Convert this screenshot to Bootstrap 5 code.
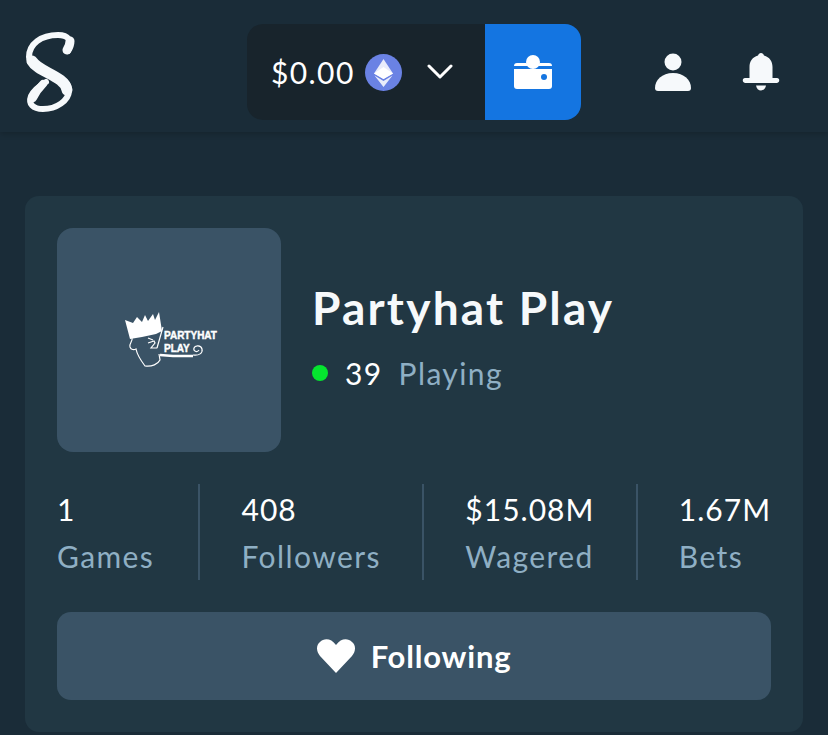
<!DOCTYPE html>
<html lang="en">
<head>
  <title>Partyhat Play</title>
  <meta charset="UTF-8" />
  <meta name="viewport" content="width=device-width, initial-scale=1.0" />
  <link href="https://cdn.jsdelivr.net/npm/bootstrap@5.3.0/dist/css/bootstrap.min.css" rel="stylesheet">
  <style>
    body {
      background-color: #1a2c38;
      font-family: "Lato", "Liberation Sans", sans-serif;
      color: #fff;
      height: 735px;
      overflow: hidden;
      letter-spacing: 1.4px;
    }

    .top-bar {
      height: 132px;
      padding: 12px 48px 0 24px;
      background-color: #1a2c38;
      box-shadow: 0 2px 6px rgba(0, 0, 0, 0.2);
    }

    .logo-mark { width: 52px; height: 82px; }
    .wallet-spot { margin-left: 171px; height: 96px; }

    .wallet-balance {
      width: 238px;
      height: 96px;
      padding-left: 24px;
      background-color: #18242c;
      border-radius: 16px 0 0 16px;
      font-size: 30px;
    }

    .eth-icon { margin-left: 10px; }
    .chevron-icon { margin-left: 25px; }

    .wallet-btn {
      width: 96px;
      height: 96px;
      padding: 0;
      border: 0;
      border-radius: 0 16px 16px 0;
      background-color: #1475e1;
    }

    .top-icons { margin-left: auto; gap: 50px; }

    .studio-box {
      margin: 64px 25px 0;
      padding: 32px;
      background-color: #213743;
      border: 0;
      border-radius: 14px;
      color: #fff;
    }

    .studio-tile {
      width: 224px;
      height: 224px;
      background-color: #3a5366;
      border-radius: 16px;
    }

    .studio-info { margin: 0 0 6px 31px; }

    .studio-name {
      margin: 0 0 18px;
      font-size: 46px;
      font-weight: 700;
      line-height: 54px;
      letter-spacing: 2.2px;
      color: #f6f9fb;
    }

    .online-dot {
      width: 16px;
      height: 16px;
      border-radius: 50%;
      background-color: #05e52f;
    }

    .online-row { font-size: 30px; line-height: 40px; }
    .online-count { margin-left: 17px; }
    .muted-text { color: #8fafc4; }

    .stat-row { height: 96px; margin-top: 32px; }
    .stat-item { padding-top: 2px; font-size: 30px; line-height: 47px; }
    .stat-first { min-width: 100px; }
    .stat-value { letter-spacing: 1px; }
    .stat-line { width: 2px; background-color: #3a5366; }

    .follow-btn {
      height: 88px;
      margin-top: 32px;
      border: 0;
      border-radius: 14px;
      background-color: #3a5366;
      color: #fff;
      font-size: 31px;
      font-weight: 700;
      letter-spacing: 0.8px;
      gap: 16px;
    }

    .party-text {
      font-family: "Liberation Sans", sans-serif;
      font-weight: 700;
      font-size: 10px;
      letter-spacing: 0;
      fill: #fff;
      stroke: #fff;
      stroke-width: 0.4px;
    }
  </style>
</head>
<body>

  <nav class="top-bar d-flex align-items-center">
    <svg class="logo-mark" viewBox="0 0 52 82">
      <g fill="none" stroke="#f6f9fb" stroke-linecap="round">
        <path stroke-width="6" d="M44 20C49 9 44 4 34 4 17 4 5 13 5 26c0 15 40 16 40 33 0 11-13 19-26 19-10 0-15-5-12-13 3-6 8-10 15-14"/>
        <path stroke-width="11" d="M8 30c6 11 33 15 35 29"/>
        <path stroke-width="9" d="M43 19c2-3 3-6 3-9"/>
        <path stroke-width="8" d="M9 67c2-4 6-10 10-14"/>
      </g>
    </svg>

    <div class="wallet-spot d-flex">
      <div class="wallet-balance d-flex align-items-center">
        <span>$0.00</span>
        <svg class="eth-icon" width="37" height="37" viewBox="0 0 37 37">
          <circle cx="18.5" cy="18.5" r="18.5" fill="#6a82e4"/>
          <path fill="#fff" opacity=".85" d="M18.5 5L9 19.500l9.500 5.500 9.500-5.500z"/>
          <path fill="#fff" d="M18.5 13L9 19.500l9.500 5.500 9.500-5.500z"/>
          <path fill="#fff" opacity=".85" d="M9.500 21.500l9 11.500 9-11.500-9 5.500z"/>
        </svg>
        <svg class="chevron-icon" width="26" height="18" viewBox="0 0 26 18">
          <path d="M2 3l11 11L24 3" fill="none" stroke="#fff" stroke-width="3" stroke-linecap="round" stroke-linejoin="round"/>
        </svg>
      </div>
      <button class="wallet-btn btn d-flex align-items-center justify-content-center" type="button" aria-label="Wallet">
        <svg width="38" height="34" viewBox="0 0 38 34">
          <circle cx="19" cy="7" r="7" fill="#fff"/>
          <path fill="#fff" d="M3 8h9.500a7 7 0 0 0 13 0H35a3 3 0 0 1 3 3H0a3 3 0 0 1 3-3z"/>
          <path fill="#fff" d="M0 14h38v17a3 3 0 0 1-3 3H3a3 3 0 0 1-3-3z"/>
          <circle cx="30" cy="22" r="3" fill="#1475e1"/>
        </svg>
      </button>
    </div>

    <div class="top-icons d-flex align-items-center">
      <svg width="38" height="38" viewBox="0 0 38 38">
        <circle cx="19" cy="9" r="8.500" fill="#f6f9fb"/>
        <path fill="#f6f9fb" d="M19 20c11 0 18 7 18 15 0 2-1 3-3 3H4c-2 0-3-1-3-3 0-8 7-15 18-15z"/>
      </svg>
      <svg width="38" height="38" viewBox="0 0 38 38">
        <path fill="#f6f9fb" d="M19 0c1.500 0 2.500 1 3 2.500 5.500 1.500 8.500 6 8.500 11.500v11h4.500c3 0 3 4.500 0 5H3c-3-.5-3-5 0-5h4.500V14c0-5.500 3-10 8.500-11.500C16.500 1 17.500 0 19 0z"/>
        <path fill="#f6f9fb" d="M14 32.500h10c-.5 3-2.500 5-5 5s-4.500-2-5-5z"/>
      </svg>
    </div>
  </nav>

  <div class="studio-box card">
    <div class="d-flex flex-row align-items-center">
      <div class="studio-tile d-flex align-items-center justify-content-center">
        <svg width="110" height="70" viewBox="-5 0 110 70">
          <path fill="#fff" d="M6 15l8 3 4-6 5 5 3-7 3 6 5-7 2 6 4-8 3 19-6 3-14 3-12 2z"/>
          <path fill="none" stroke="#fff" stroke-width="1.200" d="M13 33c1 3-3 5-2 9 1 3 4 3 6 2 1 5 3 9 9 17 7 1 13-2 15-6l-1-6M29 33l5 2M29 38l6-2 1 2-4 5h6M44 22l-6 21"/>
          <text class="party-text" x="45" y="34">PARTYHAT</text>
          <text class="party-text" x="45" y="47">PLAY</text>
          <path fill="none" stroke="#fff" stroke-width="2.500" d="M41 50l13 1h20"/>
          <path fill="none" stroke="#fff" stroke-width="1.200" d="M74 50c6 1 10-2 9-6-1-4-7-4-8-1-1 3 3 5 5 2"/>
        </svg>
      </div>
      <div class="studio-info">
        <h1 class="studio-name">Partyhat Play</h1>
        <div class="online-row d-flex align-items-center">
          <span class="online-dot"></span>
          <span class="online-count">39</span>
          <span class="muted-text ms-3">Playing</span>
        </div>
      </div>
    </div>

    <div class="stat-row d-flex justify-content-between">
      <div class="stat-item stat-first"><div class="stat-value">1</div><div class="muted-text">Games</div></div>
      <div class="stat-line"></div>
      <div class="stat-item"><div class="stat-value">408</div><div class="muted-text">Followers</div></div>
      <div class="stat-line"></div>
      <div class="stat-item"><div class="stat-value">$15.08M</div><div class="muted-text">Wagered</div></div>
      <div class="stat-line"></div>
      <div class="stat-item"><div class="stat-value">1.67M</div><div class="muted-text">Bets</div></div>
    </div>

    <button class="follow-btn btn d-flex align-items-center justify-content-center" type="button">
      <svg width="38" height="34" viewBox="0 0 38 34">
        <path fill="#fff" d="M19 34L3 17C-1 12-1 6 3 3c4-4 11-4 16 3 5-7 12-7 16-3 4 3 4 9 0 14z"/>
      </svg>
      Following
    </button>
  </div>

  <script src="https://cdn.jsdelivr.net/npm/bootstrap@5.3.0/dist/js/bootstrap.bundle.min.js"></script>
</body>
</html>
